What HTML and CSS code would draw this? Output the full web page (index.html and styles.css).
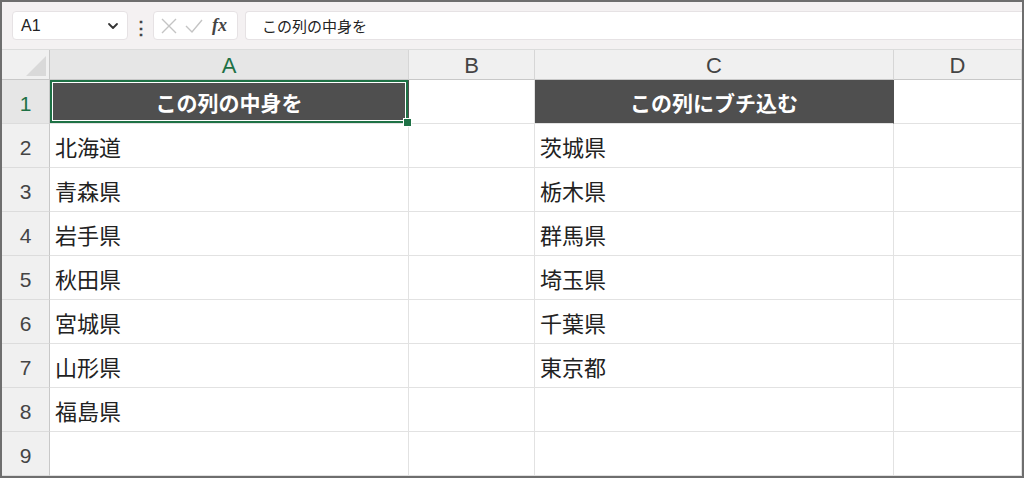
FILE: index.html
```html
<!DOCTYPE html>
<html lang="ja">
<head>
    <meta charset="UTF-8">
    <meta name="viewport" content="width=device-width, initial-scale=1.0">
    <title>ブック1 - Excel</title>
    <link rel="stylesheet" href="styles.css">
</head>
<body>
    <div class="ventana">
        <div class="barra-formula">
            <div class="cuadro-nombre">
                <span>A1</span>
                <svg width="12" height="8" viewBox="0 0 12 8"><path d="M2 2 L6 6 L10 2" fill="none" stroke="#333" stroke-width="1.8" stroke-linecap="round" stroke-linejoin="round"/></svg>
            </div>
            <div class="puntos">⋮</div>
            <div class="botones-formula">
                <svg width="18" height="18" viewBox="0 0 18 18"><path d="M2 2 L16 16 M16 2 L2 16" stroke="#c4c4c4" stroke-width="1.4"/></svg>
                <svg width="20" height="18" viewBox="0 0 20 18"><path d="M2 9 L8 15 L18 3" fill="none" stroke="#c4c4c4" stroke-width="1.4"/></svg>
                <span class="fx">fx</span>
            </div>
            <div class="entrada">この列の中身を</div>
        </div>

        <div class="hoja">
            <div class="esquina"></div>
            <div class="col-cab activa">A</div>
            <div class="col-cab">B</div>
            <div class="col-cab">C</div>
            <div class="col-cab">D</div>

            <div class="fila-cab activa">1</div>
            <div class="celda titulo seleccionada">この列の中身を<span class="tirador"></span></div>
            <div class="celda"></div>
            <div class="celda titulo">この列にブチ込む</div>
            <div class="celda"></div>

            <div class="fila-cab">2</div>
            <div class="celda">北海道</div>
            <div class="celda"></div>
            <div class="celda">茨城県</div>
            <div class="celda"></div>

            <div class="fila-cab">3</div>
            <div class="celda">青森県</div>
            <div class="celda"></div>
            <div class="celda">栃木県</div>
            <div class="celda"></div>

            <div class="fila-cab">4</div>
            <div class="celda">岩手県</div>
            <div class="celda"></div>
            <div class="celda">群馬県</div>
            <div class="celda"></div>

            <div class="fila-cab">5</div>
            <div class="celda">秋田県</div>
            <div class="celda"></div>
            <div class="celda">埼玉県</div>
            <div class="celda"></div>

            <div class="fila-cab">6</div>
            <div class="celda">宮城県</div>
            <div class="celda"></div>
            <div class="celda">千葉県</div>
            <div class="celda"></div>

            <div class="fila-cab">7</div>
            <div class="celda">山形県</div>
            <div class="celda"></div>
            <div class="celda">東京都</div>
            <div class="celda"></div>

            <div class="fila-cab">8</div>
            <div class="celda">福島県</div>
            <div class="celda"></div>
            <div class="celda"></div>
            <div class="celda"></div>

            <div class="fila-cab">9</div>
            <div class="celda"></div>
            <div class="celda"></div>
            <div class="celda"></div>
            <div class="celda"></div>
        </div>
    </div>
</body>
</html>
```

FILE: styles.css
```css
body {
    margin: 0;
    background-color: #ffffff;
    font-family: "Noto Sans CJK JP", "Noto Sans", sans-serif;
}
.ventana {
    width: 1020px;
    height: 474px;
    border: 2px solid #6e6e6e;
    overflow: hidden;
}
.barra-formula {
    height: 48px;
    background-color: #f4f1f2;
    border-bottom: 1px solid #dcdcdc;
    display: flex;
    align-items: center;
    padding-left: 10px;
    box-sizing: border-box;
}
.cuadro-nombre {
    width: 116px;
    height: 29px;
    background-color: #ffffff;
    border: 1px solid #e6e2e4;
    border-radius: 4px;
    box-sizing: border-box;
    display: flex;
    align-items: center;
    justify-content: space-between;
    padding: 0 8px 0 8px;
    font-family: "Liberation Sans", sans-serif;
    font-size: 16px;
    color: #222;
}
.puntos {
    width: 25px;
    text-align: center;
    font-size: 18px;
    font-weight: bold;
    color: #444;
    line-height: 1;
}
.botones-formula {
    width: 85px;
    height: 29px;
    background-color: #ffffff;
    border: 1px solid #e6e2e4;
    border-radius: 4px;
    box-sizing: border-box;
    display: flex;
    align-items: center;
    gap: 6px;
    padding-left: 6px;
}
.fx {
    font-family: "Liberation Serif", serif;
    font-style: italic;
    font-weight: bold;
    font-size: 18px;
    color: #444;
    margin-left: 2px;
}
.entrada {
    flex: 1;
    height: 29px;
    margin-left: 7px;
    background-color: #ffffff;
    border: 1px solid #e6e2e4;
    border-right: none;
    border-radius: 4px 0 0 4px;
    box-sizing: border-box;
    display: flex;
    align-items: center;
    padding-left: 16px;
    font-size: 15px;
    color: #222;
}
.hoja {
    display: grid;
    grid-template-columns: 48px 359px 126px 359px 128px;
    grid-template-rows: 30px repeat(9, 44px);
}
.esquina {
    background-color: #f0f0f0;
    border-right: 1px solid #c8c8c8;
    border-bottom: 1px solid #c8c8c8;
    position: relative;
}
.esquina::after {
    content: "";
    position: absolute;
    right: 3px;
    bottom: 3px;
    width: 0;
    height: 0;
    border-left: 20px solid transparent;
    border-bottom: 20px solid #d9d9d9;
}
.col-cab {
    background-color: #f0f0f0;
    border-right: 1px solid #d6d6d6;
    border-bottom: 1px solid #c8c8c8;
    display: flex;
    align-items: center;
    justify-content: center;
    font-family: "Liberation Sans", sans-serif;
    font-size: 22px;
    color: #444;
    padding-top: 2px;
}
.fila-cab {
    background-color: #f0f0f0;
    border-right: 1px solid #c8c8c8;
    border-bottom: 1px solid #dcdcdc;
    display: flex;
    align-items: center;
    justify-content: center;
    font-family: "Liberation Sans", sans-serif;
    font-size: 21px;
    color: #444;
    padding-top: 5px;
    box-sizing: border-box;
}
.col-cab.activa,
.fila-cab.activa {
    background-color: #e6e6e6;
    color: #1e7145;
}
.celda {
    border-right: 1px solid #e2e2e2;
    border-bottom: 1px solid #e2e2e2;
    display: flex;
    align-items: center;
    padding-left: 5px;
    font-size: 22px;
    color: #222;
    box-sizing: border-box;
}
.celda.titulo {
    background-color: #4f4f4f;
    color: #ffffff;
    font-weight: bold;
    font-size: 21px;
    justify-content: center;
    padding-left: 0;
    border-right-color: #4f4f4f;
}
.celda.seleccionada {
    position: relative;
    box-shadow: inset 0 0 0 2px #1e7145, inset 0 0 0 3px #ffffff;
}
.tirador {
    position: absolute;
    right: -4px;
    bottom: -4px;
    width: 7px;
    height: 7px;
    background-color: #1e7145;
    border: 1px solid #ffffff;
}
```
